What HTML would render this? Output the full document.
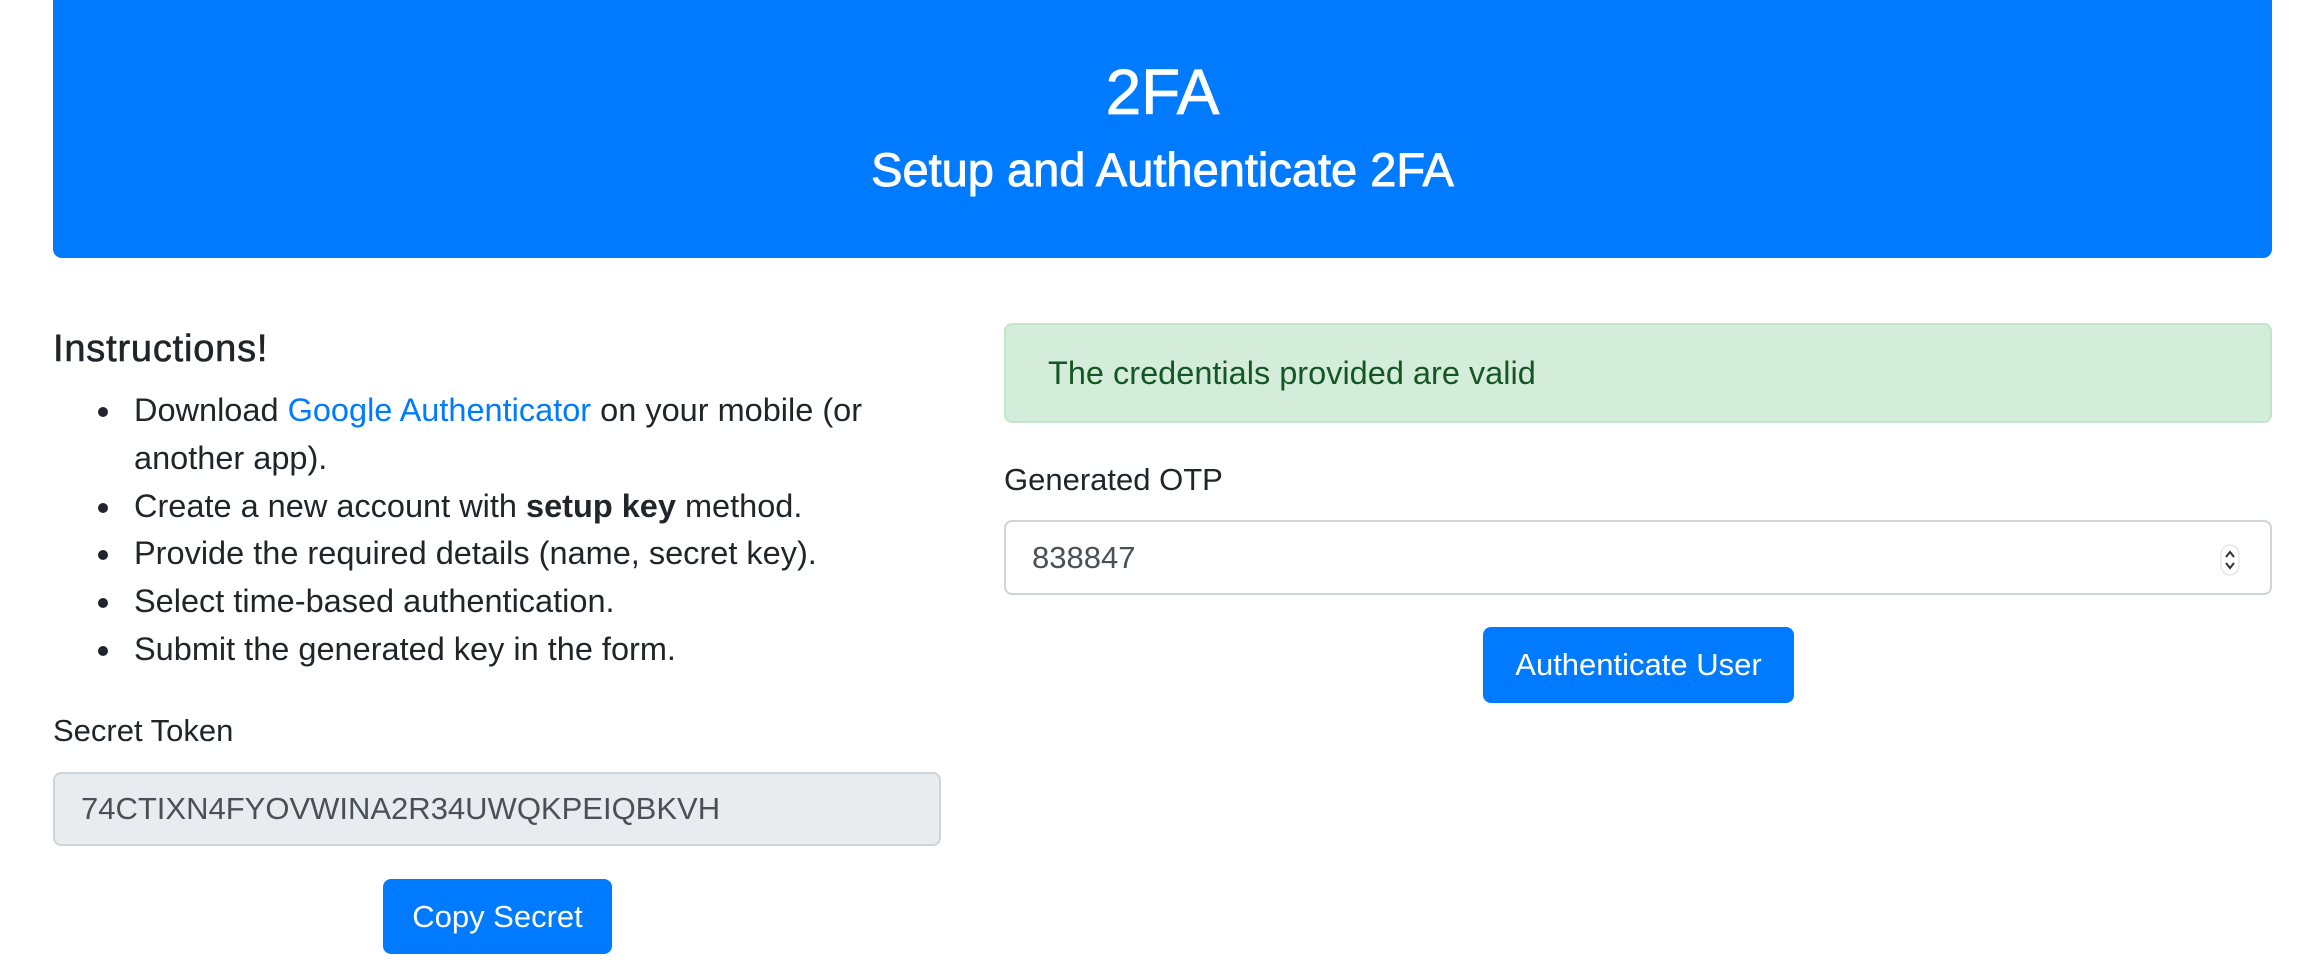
<!DOCTYPE html>
<html><head><meta charset="utf-8"><style>
*{box-sizing:border-box;margin:0;padding:0}
body{width:2302px;height:976px;background:#fff;font-family:"Liberation Sans",Arial,sans-serif;color:#212529;position:relative;overflow:hidden}
.abs{position:absolute}
.hdr{left:53px;top:-10px;width:2219px;height:268px;background:#007bff;border-radius:9px;color:#fff;text-align:center}
.t1{position:absolute;left:0;right:0;top:70px;font-size:64px;line-height:64px;-webkit-text-stroke:0.8px #fff}
.t2{position:absolute;left:0;right:0;top:156px;font-size:47px;line-height:48px;-webkit-text-stroke:0.9px #fff}
.h4{left:53px;top:327px;font-size:38px;line-height:44px;letter-spacing:0.8px;-webkit-text-stroke:0.6px #212529}
ul{position:absolute;left:134px;top:387px;font-size:32.5px;line-height:47.8px;list-style:none;width:800px}
li{position:relative}
li:before{content:"";position:absolute;left:-36px;top:20px;width:10px;height:10px;border-radius:50%;background:#212529}
a{color:#007bff;text-decoration:none}
.lbl{font-size:31px;line-height:36px}
.inp{border:2px solid #ced4da;border-radius:8px;font-size:31px;color:#495057;padding-left:26px;display:flex;align-items:center}
.btn{background:#007bff;color:#fff;border-radius:8px;font-size:31px;display:flex;align-items:center;justify-content:center}
</style></head><body>
<div class="abs hdr"><div class="t1">2FA</div><div class="t2">Setup and Authenticate 2FA</div></div>
<div class="abs h4">Instructions!</div>
<ul>
<li>Download <a>Google Authenticator</a> on your mobile (or another app).</li>
<li>Create a new account with <b>setup key</b> method.</li>
<li>Provide the required details (name, secret key).</li>
<li>Select time-based authentication.</li>
<li>Submit the generated key in the form.</li>
</ul>
<div class="abs lbl" style="left:53px;top:713px">Secret Token</div>
<div class="abs inp" style="left:53px;top:772px;width:888px;height:74px;background:#e9ecef">74CTIXN4FYOVWINA2R34UWQKPEIQBKVH</div>
<div class="abs btn" style="left:383px;top:879px;width:229px;height:75px">Copy Secret</div>
<div class="abs" style="left:1004px;top:323px;width:1268px;height:100px;background:#d4edda;border:2px solid #c3e6cb;border-radius:8px;color:#155724;font-size:32.5px;padding-left:42px;display:flex;align-items:center">The credentials provided are valid</div>
<div class="abs lbl" style="left:1004px;top:462px">Generated OTP</div>
<div class="abs inp" style="left:1004px;top:520px;width:1268px;height:75px;background:#fff">838847
<svg style="position:absolute;right:30px;top:22px" width="20" height="32" viewBox="0 0 20 32"><rect x="1" y="1" width="18" height="30" rx="9" fill="#fff" stroke="#ddd"/><path d="M6 13l4-5 4 5M6 19l4 5 4-5" fill="none" stroke="#333" stroke-width="2"/></svg></div>
<div class="abs btn" style="left:1483px;top:627px;width:311px;height:76px">Authenticate User</div>
</body></html>
